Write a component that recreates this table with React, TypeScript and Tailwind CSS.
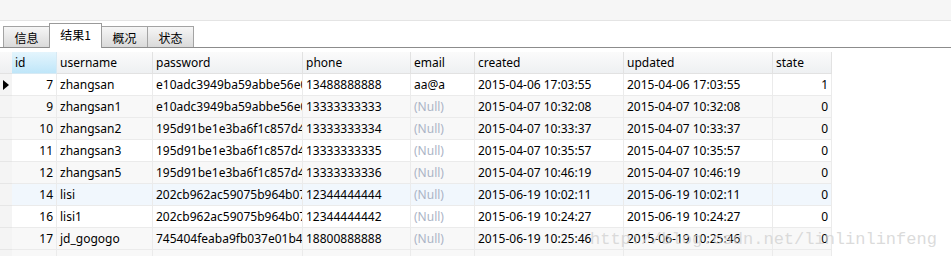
import React from "react";

const cols = [
  { key: "id", label: "id", w: 45, right: true },
  { key: "username", label: "username", w: 96 },
  { key: "password", label: "password", w: 150 },
  { key: "phone", label: "phone", w: 108 },
  { key: "email", label: "email", w: 64 },
  { key: "created", label: "created", w: 149 },
  { key: "updated", label: "updated", w: 149 },
  { key: "state", label: "state", w: 59, right: true },
];

type Row = { id: string; username: string; password: string; phone: string; email: string | null; created: string; updated: string; state: string };

const rows: Row[] = [
  { id: "7", username: "zhangsan", password: "e10adc3949ba59abbe56e057f20f883e", phone: "13488888888", email: "aa@a", created: "2015-04-06 17:03:55", updated: "2015-04-06 17:03:55", state: "1" },
  { id: "9", username: "zhangsan1", password: "e10adc3949ba59abbe56e057f20f883e", phone: "13333333333", email: null, created: "2015-04-07 10:32:08", updated: "2015-04-07 10:32:08", state: "0" },
  { id: "10", username: "zhangsan2", password: "195d91be1e3ba6f1c857d46f24c5a454", phone: "13333333334", email: null, created: "2015-04-07 10:33:37", updated: "2015-04-07 10:33:37", state: "0" },
  { id: "11", username: "zhangsan3", password: "195d91be1e3ba6f1c857d46f24c5a454", phone: "13333333335", email: null, created: "2015-04-07 10:35:57", updated: "2015-04-07 10:35:57", state: "0" },
  { id: "12", username: "zhangsan5", password: "195d91be1e3ba6f1c857d46f24c5a454", phone: "13333333336", email: null, created: "2015-04-07 10:46:19", updated: "2015-04-07 10:46:19", state: "0" },
  { id: "14", username: "lisi", password: "202cb962ac59075b964b07152d234b70", phone: "12344444444", email: null, created: "2015-06-19 10:02:11", updated: "2015-06-19 10:02:11", state: "0" },
  { id: "16", username: "lisi1", password: "202cb962ac59075b964b07152d234b70", phone: "12344444442", email: null, created: "2015-06-19 10:24:27", updated: "2015-06-19 10:24:27", state: "0" },
  { id: "17", username: "jd_gogogo", password: "745404feaba9fb037e01b4c5a4b8d6b2", phone: "18800888888", email: null, created: "2015-06-19 10:25:46", updated: "2015-06-19 10:25:46", state: "0" },
];

const rowBg = ["bg-white", "bg-[#f8f8f8]", "bg-[#f8f8f8]", "bg-white", "bg-[#f8f8f8]", "bg-[#f1f7fd]", "bg-white", "bg-[#f8f8f8]"];

function Tab({ label, active }: { label: string; active?: boolean }) {
  if (active) {
    return (
      <div className="relative z-10 -mb-px -ml-px flex h-[25px] w-[53px] items-start justify-center border border-b-0 border-[#9a9a9a] bg-white pt-[2px] text-[12px] leading-[18px] text-black">
        {label}
      </div>
    );
  }
  return (
    <div className="-ml-px flex h-[21px] w-[47px] items-center justify-center border border-b-0 border-[#a3a3a3] bg-gradient-to-b from-[#f6f6f6] to-[#dadada] pt-[1px] text-[12px] text-black first:ml-0">
      {label}
    </div>
  );
}

export default function App() {
  return (
    <div
      className="relative h-[256px] w-[951px] overflow-hidden bg-white"
      style={{ fontFamily: '"Noto Sans", "Noto Sans CJK SC", sans-serif' }}
    >
      <div className="h-[20px] bg-[#f6f6f6]" />
      <div className="h-px bg-[#e4e4e4]" />
      <div className="h-[2px] bg-white" />
      <div
        className="flex h-[25px] items-end border-b border-[#8c8c8c] pl-[3px]"
        style={{ fontFamily: '"Noto Sans CJK SC", "Noto Sans", sans-serif' }}
      >
        <Tab label="信息" />
        <Tab label="结果1" active />
        <Tab label="概况" />
        <Tab label="状态" />
      </div>
      <div className="h-[4px]" />
      <div className="flex h-[22px] text-[12px] text-black">
        <div className="w-[12px] border-b border-[#e2e2e2] bg-gradient-to-b from-[#fafafa] to-[#eeeff1]" />
        {cols.map((c, i) => (
          <div
            key={c.key}
            style={{ width: c.w }}
            className={
              "flex items-center border-r border-b px-[3px] leading-[22px] " +
              (i === 0
                ? "border-[#d7e9f3] bg-gradient-to-b from-[#e4f5fd] to-[#bfe6f9]"
                : "border-[#e2e2e2] bg-gradient-to-b from-[#fbfbfb] to-[#eef0f2]")
            }
          >
            {c.label}
          </div>
        ))}
      </div>
      {[...rows, null].map((r, ri) => (
        <div key={ri} className="flex h-[22px] text-[12px] text-black">
          <div className="relative w-[12px] border-b border-[#e6e6e6] bg-[#f4f4f4]">
            {ri === 0 && (
              <svg className="absolute left-[3px] top-[6px]" width="6" height="10" viewBox="0 0 6 10">
                <path d="M0 0 L6 5 L0 10 Z" fill="#000" />
              </svg>
            )}
          </div>
          {cols.map((c) => {
            const v = r ? (r as any)[c.key] : "";
            const isNull = r && v === null;
            return (
              <div
                key={c.key}
                style={{ width: c.w }}
                className={
                  "flex items-center overflow-hidden whitespace-nowrap border-r border-b border-[#ebebeb] px-[3px] leading-[22px] " +
                  (r ? rowBg[ri] : "bg-[#f8f8f8]") +
                  (c.right ? " justify-end" : "")
                }
              >
                {isNull ? <span className="text-[#abb4c6]">(Null)</span> : v}
              </div>
            );
          })}
        </div>
      ))}
      <div
        className="pointer-events-none absolute left-[590px] top-[230px] whitespace-nowrap text-[17px] leading-[20px] text-[#d2d2d2]/80"
        style={{ fontFamily: '"Liberation Mono", monospace' }}
      >
        http://blog.csdn.net/linlinlinfeng
      </div>
    </div>
  );
}
